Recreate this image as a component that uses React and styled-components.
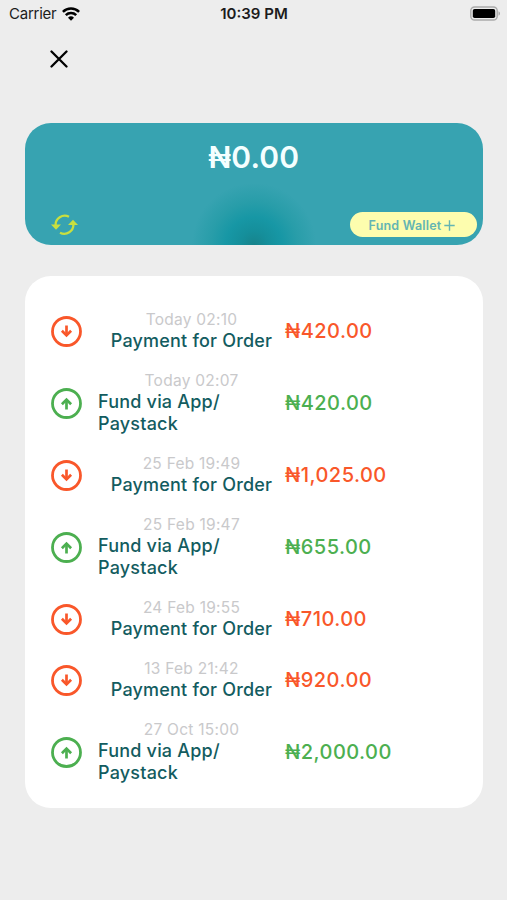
import React from 'react';
import styled, { createGlobalStyle } from 'styled-components';

const GlobalStyle = createGlobalStyle`
	* {
		box-sizing: border-box;
	}
	body {
		margin: 0;
		background: #ededed;
		font-family: Inter, 'Liberation Sans', sans-serif;
	}
`;

const Screen = styled.main`
	display: flex;
	flex-direction: column;
	width: 507px;
	height: 900px;
	overflow: hidden;
	background: #ededed;
`;

const StatusBar = styled.header`
	display: grid;
	grid-template-columns: 1fr auto 1fr;
	align-items: center;
	height: 27px;
	padding: 0 7px 0 9px;
	color: #1c1c1c;
	font-size: 15px;
`;

const Carrier = styled.div`
	display: flex;
	align-items: center;
	gap: 6px;
	letter-spacing: -0.25px;
`;

const Clock = styled.div`
	margin-right: 1px;
	font-size: 15px;
	font-weight: 600;
`;

const Battery = styled.svg`
	justify-self: end;
`;

const NavBar = styled.nav`
	height: 96px;
	padding: 23px 0 0 50px;
`;

const CloseButton = styled.button`
	display: block;
	width: 18px;
	height: 18px;
	padding: 0;
	border: 0;
	background: none;
`;

const Icon = styled.svg`
	display: block;
	flex: none;
`;

const Wallet = styled.section`
	display: flex;
	flex-direction: column;
	justify-content: space-between;
	height: 122px;
	margin: 0 24.5px 0 25px;
	padding: 16px 6px 8px 26px;
	border-radius: 26px;
	background: radial-gradient(circle at 50% 100%, #17838b 0, #158f9b 14px, #1797a5 28px, #289da9 43px, #37a3b1 62px);
`;

const Balance = styled.div`
	margin-left: -20px;
	color: #f4ffff;
	font-size: 30px;
	font-weight: 600;
	line-height: 36px;
	letter-spacing: 0.2px;
	text-align: center;
`;

const WalletActions = styled.div`
	display: flex;
	align-items: center;
	justify-content: space-between;
`;

const FundButton = styled.button`
	display: flex;
	align-items: center;
	justify-content: center;
	gap: 3px;
	width: 127px;
	height: 25px;
	padding: 1px 2px 0 0;
	border: 0;
	border-radius: 13px;
	background: #fdfdae;
	color: #63b5b3;
	font: 600 12.5px Inter, sans-serif;
	letter-spacing: 0.2px;
`;

const History = styled.section`
	height: 532px;
	margin: 31px 24.5px 0 25px;
	padding: 25px 26px 0;
	border-radius: 26px;
	background: #fff;
`;

const Row = styled.div`
	display: flex;
	align-items: center;
	padding: 10px 0;
`;

const StatusIcon = styled(Icon)`
	margin-bottom: 1px;
`;

const Details = styled.div`
	display: flex;
	flex-direction: column;
	align-items: center;
	width: 187px;
	margin-left: 16px;
`;

const DateText = styled.div`
	margin-bottom: 1px;
	color: #c9c9cb;
	font-size: 15.5px;
	line-height: 18px;
	letter-spacing: 0.25px;
`;

const Title = styled.div`
	color: #135c60;
	font-size: 18px;
	font-weight: 500;
	line-height: 22px;
	letter-spacing: 0.2px;
	white-space: pre-line;
	align-self: ${({ $wrapped }) => ($wrapped ? 'stretch' : 'center')};
`;

const Amount = styled.div`
	margin-bottom: 2px;
	color: ${({ $credit }) => ($credit ? '#4caf50' : '#f9572a')};
	font-size: 20px;
	font-weight: 500;
	letter-spacing: 0.45px;
`;

const transactions = [
	{ date: 'Today 02:10', amount: '420.00' },
	{ date: 'Today 02:07', amount: '420.00', credit: true },
	{ date: '25 Feb 19:49', amount: '1,025.00' },
	{ date: '25 Feb 19:47', amount: '655.00', credit: true },
	{ date: '24 Feb 19:55', amount: '710.00' },
	{ date: '13 Feb 21:42', amount: '920.00' },
	{ date: '27 Oct 15:00', amount: '2,000.00', credit: true },
];

const WifiIcon = () => (
	<Icon width="18" height="14" viewBox="0 0 18 14" fill="none" stroke="#000" strokeWidth="2.5">
		<path d="M.9 4.9a11.5 11.5 0 0 1 16.2 0" />
		<path d="M3.8 8.2a7.4 7.4 0 0 1 10.4 0" />
		<path d="M9 13.8 6 10.7a4.3 4.3 0 0 1 6 0z" fill="#000" stroke="none" />
	</Icon>
);

const BatteryIcon = () => (
	<Battery width="30" height="15" viewBox="0 0 30 15">
		<rect x=".8" y="1" width="26.4" height="13" rx="3.8" fill="#ededed" stroke="#aaa" strokeWidth="1.4" />
		<rect x="2.8" y="3" width="22.4" height="9" rx="1.8" fill="#000" />
		<path d="M28.5 5.3c2 .8 2 3.6 0 4.4z" fill="#aaa" />
	</Battery>
);

const SyncIcon = () => (
	<Icon width="27" height="22" viewBox="0 0 27 22" fill="none" stroke="#c9df3f" strokeWidth="2.3">
		<path d="M18 2.8A9.2 9.2 0 0 0 4.6 11.6" />
		<path d="M9 18.8A9.2 9.2 0 0 0 22.4 10" />
		<path d="M0 10.6h10l-5 5.2z" fill="#c9df3f" stroke="none" />
		<path d="M17 11h10l-5-5.2z" fill="#c9df3f" stroke="none" />
	</Icon>
);

const ArrowIcon = ({ credit }) => (
	<StatusIcon width="31" height="31" viewBox="0 0 31 31" fill="none" stroke={credit ? '#4caf50' : '#f9572a'}>
		<circle cx="15.5" cy="15.5" r="14" strokeWidth="2.8" />
		<g strokeWidth="2.7" transform={credit ? 'rotate(180 15.5 15.5)' : undefined}>
			<path d="M15.5 9.5v10" />
			<path d="M10.9 14.8l4.6 4.6 4.6-4.6" />
		</g>
	</StatusIcon>
);

const Transaction = ({ date, amount, credit }) => (
	<Row>
		<ArrowIcon credit={credit} />
		<Details>
			<DateText>{date}</DateText>
			<Title $wrapped={credit}>{credit ? 'Fund via App/\nPaystack' : 'Payment for Order'}</Title>
		</Details>
		<Amount $credit={credit}>₦{amount}</Amount>
	</Row>
);

const App = () => (
	<Screen>
		<GlobalStyle />
		<StatusBar>
			<Carrier>Carrier <WifiIcon /></Carrier>
			<Clock>10:39 PM</Clock>
			<BatteryIcon />
		</StatusBar>
		<NavBar>
			<CloseButton aria-label="Close">
				<Icon width="18" height="18" viewBox="0 0 18 18" stroke="#000" strokeWidth="2.3" strokeLinecap="round">
					<path d="M1.5 1.5l15 15M16.5 1.5l-15 15" />
				</Icon>
			</CloseButton>
		</NavBar>
		<Wallet>
			<Balance>₦0.00</Balance>
			<WalletActions>
				<SyncIcon />
				<FundButton>
					Fund Wallet
					<Icon width="11" height="11" viewBox="0 0 11 11" stroke="#63b5b3" strokeWidth="1.4">
						<path d="M5.5 .3v10.4M.3 5.5h10.4" />
					</Icon>
				</FundButton>
			</WalletActions>
		</Wallet>
		<History>
			{transactions.map(item => <Transaction key={item.date} {...item} />)}
		</History>
	</Screen>
);

export default App;
